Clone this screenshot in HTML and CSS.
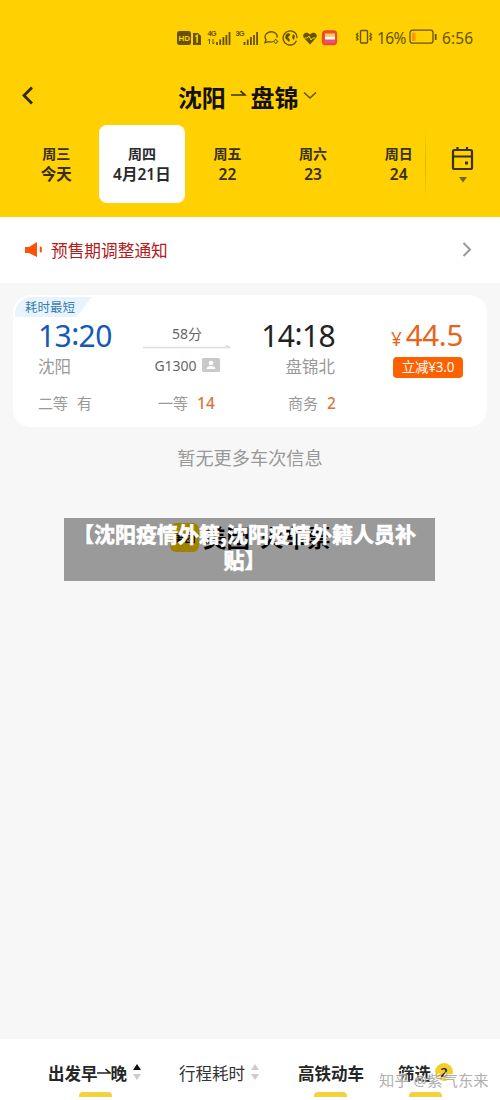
FILE: index.html
```html
<!DOCTYPE html>
<html lang="zh-CN">
<head>
<meta charset="utf-8">
<title>沈阳 - 盘锦</title>
<link rel="stylesheet" href="styles.css">
</head>
<body>
<div class="app">
  <header class="header">
    <div class="status">
      <svg class="status-icons" width="168" height="22" viewBox="0 0 168 22" fill="none" stroke="#665300" stroke-width="1.3">
        <rect x="0" y="4" width="14" height="14" rx="2.5" fill="#665300" stroke="none"/>
        <text x="1.4" y="14.300" class="glyph-yellow">HD</text>
        <path d="M16 6h5l3 3v9h-8z" fill="#665300" stroke="none"/>
        <path d="M18.5 9.5l1.6-1v7.2" stroke="#ffd102" stroke-width="1.6"/>
        <text x="30.500" y="9.4" class="glyph-net">4G</text>
        <path d="M32.5 12v5M31 13.500l1.500-1.500M36 17v-5M36 17l1.500-1.500" stroke-width="1"/>
        <path d="M40 18v-3M43.200 18v-5.500M46.400 18v-8M49.400 18v-10M52.500 18v-13" stroke-width="1.800"/>
        <text x="58.500" y="9.4" class="glyph-net">3G</text>
        <path d="M67.500 18v-3M70.700 18v-5.500M73.900 18v-8M77 18v-10M80.100 18v-13" stroke-width="1.800"/>
        <path d="M96 14.500c-1.500.8-3 .8-4.500.2l-3.500 1 1-3c-4-6 5-10 9.500-6.500 2 1.600 2 3 1.400 4.300"/>
        <path d="M98.700 12l.8 1.600 1.700.9-1.700.9-.8 1.600-.8-1.600-1.700-.9 1.700-.9z" stroke-width="1"/>
        <path d="M117 5.200a7 7 0 1 0 2.500 8.500M115 4.200a7 7 0 0 1 5 7"/>
        <path d="M109 7l3-1 1.500 2-2.500 2 2 3-1 2-4-4zM116 7l2 2-1 4-2-2z" fill="#665300" stroke="none"/>
        <path d="M133 17.500l-6-6.500c-2.800-4 2.700-7.500 6-3.500 3.300-4 8.800-.5 6 3.500z" fill="#665300" stroke="none"/>
        <path d="M127.500 11h3l1.500-2 2 4 1.500-2h3" stroke="#ffd102" stroke-width="1"/>
        <rect x="145.500" y="4" width="14" height="13.500" rx="3" fill="#f04a3c" stroke="#e84c2b"/>
        <path d="M148 8h10" stroke="#ffcf48" stroke-width="3"/><path d="M148 11h10" stroke="#fff" stroke-width="3"/><path d="M148 14.500h10" stroke="#e455a0" stroke-width="2"/>
      </svg>
      <svg class="vibrate" width="18" height="16" viewBox="0 0 18 16" fill="none" stroke="#665300" stroke-width="1.400">
        <rect x="5.500" y="1.500" width="7" height="12.500" rx="1"/>
        <path d="M3 4l-1.500 1.500L3 7l-1.500 1.500L3 10l-1.500 1.500M15 4l1.500 1.500L15 7l1.500 1.500L15 10l1.500 1.500"/>
      </svg>
      <span class="percent">16%</span>
      <svg class="battery" width="29" height="16" viewBox="0 0 29 16" fill="none" stroke="#665300" stroke-width="1.300">
        <rect x="1" y="1.200" width="23" height="13" rx="2.500"/>
        <path d="M26.700 5v6" stroke-width="1.800"/><rect x="3" y="3.500" width="3.500" height="8.500" rx="1" fill="#ff9800" stroke="none"/>
      </svg>
      <span class="clock">6:56</span>
    </div>
    <div class="titlebar">
      <svg class="back" width="14" height="20" viewBox="0 0 14 20"><path d="M12 1.500L4 9.500l8 8" fill="none" stroke="#30290a" stroke-width="2.800"/></svg>
      <h1 class="route">
        <span>沈阳</span>
        <svg width="16" height="10" viewBox="0 0 16 10"><path d="M0 6h14L9.500 2" fill="none" stroke="#3c3200" stroke-width="1.700"/></svg>
        <span>盘锦</span>
        <svg class="chev" width="14" height="9" viewBox="0 0 14 9"><path d="M1 1.500l6 5.500 6-5.500" fill="none" stroke="#665300" stroke-width="1.600"/></svg>
      </h1>
    </div>
    <nav class="dates">
      <div class="date"><span class="week">周三</span><span class="day">今天</span></div>
      <div class="date selected"><span class="week">周四</span><span class="day">4月21日</span></div>
      <div class="date"><span class="week">周五</span><span class="day">22</span></div>
      <div class="date"><span class="week">周六</span><span class="day">23</span></div>
      <div class="date"><span class="week">周日</span><span class="day">24</span></div>
      <div class="calendar">
        <svg width="24" height="36" viewBox="0 0 24 36" fill="none" stroke="#3a3000" stroke-width="2.200">
          <rect x="3" y="3" width="19" height="19" rx="1.500"/><path d="M3 9.500h19M7.500 0v4M17 0v4"/>
          <rect x="15" y="14.500" width="3" height="3" fill="#3a3000" stroke="none"/>
          <path d="M9 30h8l-4 5.500z" fill="#7a6400" stroke="none"/>
        </svg>
      </div>
    </nav>
  </header>
  <div class="notice">
    <svg width="18" height="16" viewBox="0 0 18 16" fill="#ff5207"><path d="M0 5h4l8-5v15l-8-4H0z"/><rect x="14.800" y="4.500" width="2" height="6" rx="1"/></svg>
    <span class="notice-text">预售期调整通知</span>
    <svg class="more" width="10" height="16" viewBox="0 0 10 16"><path d="M1.500 1L8 7.500 1.500 14" fill="none" stroke="#999" stroke-width="2"/></svg>
  </div>
  <main class="content">
    <article class="train">
      <div class="tag"><span>耗时最短</span></div>
      <div class="trip">
        <div class="depart"><span class="time blue">13<em>:</em>20</span><span class="station">沈阳</span></div>
        <div class="middle">
          <span class="duration">58分</span>
          <svg width="88" height="4" viewBox="0 0 88 4"><path d="M0 2.500h87L83 .5" fill="none" stroke="#ddd" stroke-width="1.500"/></svg>
          <span class="number">G1300<svg width="18" height="14" viewBox="0 0 18 14"><rect width="18" height="14" rx="1.500" fill="#c9c9c9"/><circle cx="9" cy="5" r="2.300" fill="#fff"/><path d="M4.500 11c0-4 9-4 9 0z" fill="#fff"/></svg></span>
        </div>
        <div class="arrive"><span class="time">14<em>:</em>18</span><span class="station">盘锦北</span></div>
        <div class="price"><span class="amount"><small>¥</small>44.5</span><span class="discount">立减¥3.0</span></div>
      </div>
      <div class="seats">
        <span class="seat">二等<i>有</i></span>
        <span class="seat">一等<b>14</b></span>
        <span class="seat">商务<b>2</b></span>
      </div>
    </article>
    <p class="empty">暂无更多车次信息</p>
    <div class="brand">
      <span class="logo">美团</span><span>美团</span><span class="product">火车票</span>
      <div class="caption">【沈阳疫情外籍,沈阳疫情外籍人员补贴】</div>
    </div>
  </main>
  <footer class="filters">
    <div class="filter active f1"><span>出发早<svg width="14" height="8" viewBox="0 0 14 8"><path d="M0 6h13L8.500 2" fill="none" stroke="#222" stroke-width="1.600"/></svg>晚</span><svg class="sort" width="8" height="18" viewBox="0 0 8 18"><path d="M0 7l4-6 4 6z" fill="#111"/><path d="M0 11l4 6 4-6z" fill="#ccc"/></svg></div>
    <div class="filter f2"><span>行程耗时</span><svg class="sort" width="8" height="18" viewBox="0 0 8 18"><path d="M0 7l4-6 4 6zM0 11l4 6 4-6z" fill="#ccc"/></svg></div>
    <div class="filter active f3"><span>高铁动车</span></div>
    <div class="filter active f4"><span>筛选</span><span class="count">2</span></div>
    <div class="watermark">知乎 @紫气东来</div>
  </footer>
</div>
</body>
</html>
```
FILE: styles.css
```css
* { box-sizing: border-box; }
body { margin: 0; font-family: "Noto Sans", "Noto Sans CJK SC", sans-serif; color: #222; }
.app { width: 500px; height: 1100px; display: flex; flex-direction: column; background: #f7f7f7; overflow: hidden; }
svg { display: block; flex: none; }
span { white-space: nowrap; }

.header { height: 217px; background: #ffd102; flex: none; }
.status { height: 75px; padding-left: 177px; display: flex; align-items: center; color: #665300; font-size: 15.500px; }
.status-icons { margin-right: 10px; }
.vibrate { margin-top: -1px; }
.glyph-yellow { font: bold 8px "Liberation Sans", sans-serif; fill: #ffd102; stroke: none; }
.glyph-net { font: bold 7.500px "Liberation Sans", sans-serif; letter-spacing: -1px; fill: #665300; stroke: none; }
.percent { width: 31px; margin-left: 4px; letter-spacing: -.6px; }
.battery { margin: -1px 0 0 1px; }
.clock { margin-left: 4px; letter-spacing: .1px; }
.titlebar { height: 50px; display: flex; align-items: center; padding: 0 0 9px 20px; }
.route { display: flex; align-items: center; margin: 2px 0 0 144px; font-size: 24px; line-height: 30px; font-weight: 700; color: #141000; font-family: "Noto Sans CJK SC", sans-serif; letter-spacing: -.2px; }
.route svg { margin: -5px 4px 0 5px; }
.route .chev { margin: -2px 0 0 5px; }
.dates { display: flex; height: 78px; padding-left: 13.500px; }
.date { width: 85.600px; flex: none; display: flex; flex-direction: column; align-items: center; justify-content: center; color: #372f0b; font-weight: 600; border-radius: 8px; }
.selected { background: #fff; color: #292929; }
.week { font-size: 14px; line-height: 20px; }
.day { font-size: 15.500px; line-height: 20px; }
.calendar { width: 75px; margin-left: -16.500px; display: flex; justify-content: center; padding-top: 22px; background: linear-gradient(transparent, #d9b000, transparent) left / 1px 72px no-repeat; }

.notice { height: 66px; flex: none; background: #fff; display: flex; align-items: center; padding: 0 28px 0 25px; }
.notice-text { margin-left: 8px; color: #b31c1c; font-size: 16.700px; }
.more { margin-left: auto; }

.content { flex: 1; padding: 12px 13px 0; }
.train { height: 132px; background: #fff; border-radius: 18px; overflow: hidden; }
.tag { margin: 2px 0 0 2px; width: 77px; height: 20px; padding-left: 10px; background: #e9f3fd; clip-path: polygon(0 0, 100% 0, 80% 100%, 0 100%); border-radius: 17px 0 0 0; color: #347eb3; font-size: 12.500px; line-height: 22px; }
.trip { display: flex; height: 70px; padding-left: 25px; }
.trip > div { display: flex; flex-direction: column; }
.time { font-size: 30px; line-height: 38px; letter-spacing: -.6px; color: #222; }
.time em { font-style: normal; position: relative; top: -2px; }
.blue { color: #1459b8; }
.station { font-size: 16.500px; line-height: 24px; color: #999; }
.depart { width: 105px; }
.middle { width: 88px; align-items: center; padding-top: 7px; }
.duration { font-size: 14px; line-height: 19px; color: #666; height: 21px; }
.number { display: flex; align-items: center; gap: 5px; margin-top: 5px; font-size: 14px; line-height: 24px; color: #666; }
.number svg { margin-top: -3px; }
.arrive { width: 104px; align-items: flex-end; }
.price { width: 128px; align-items: flex-end; }
.amount { font-size: 29.500px; line-height: 35px; letter-spacing: -.3px; color: #e8641b; }
.amount small { font-size: 19px; margin-right: 4px; }
.discount { width: 70px; height: 21px; border-radius: 4px; background: #ff6000; color: #fff; font-size: 13.500px; line-height: 21px; text-align: center; letter-spacing: -.2px; }
.seats { display: flex; padding-left: 25px; font-size: 15px; line-height: 32px; color: #999; }
.seat { width: 120px; }
.seat + .seat { width: 130px; }
.seat i { font-style: normal; margin-left: 9px; }
.seat b { font-size: 15.500px; font-weight: 500; color: #d97536; margin-left: 9px; }
.empty { margin: 17px 0 0; text-align: center; font-size: 18.200px; line-height: 28px; color: #999; }
.brand { position: relative; margin: 46px -13px 0; height: 63px; padding: 5px 0 0 170px; display: flex; font: 700 23.500px/28px "Noto Sans CJK SC", sans-serif; color: #000; }
.logo { width: 29px; height: 29px; border-radius: 6px; background: #ffd102; font-size: 11px; line-height: 28px; text-align: center; margin-right: 4px; }
.product { margin-left: 10px; }
.caption { position: absolute; left: 64px; top: 0; width: 371px; height: 63px; padding: 2px 10px 0 0; background: rgba(0, 0, 0, .375); color: #fff; text-align: center; font-size: 21px; line-height: 26px; -webkit-text-stroke: .6px #fff; }

.filters { position: relative; height: 61px; flex: none; background: #fff; display: flex; padding-left: 48px; font-size: 16.500px; }
.filter { height: 58px; display: flex; align-items: center; padding-top: 10px; color: #333; position: relative; }
.filter > span { display: flex; align-items: center; }
.active { font-weight: 600; color: #262626; }
.active::after { content: ""; position: absolute; left: var(--mark); bottom: 0; width: 33px; height: 5px; border-radius: 4px 4px 0 0; background: #f3d33c; }
.f1 { width: 131px; --mark: 31px; }
.f2 { width: 119px; }
.f3 { width: 100px; --mark: 16px; }
.f4 { --mark: 11px; }
.f1 > span svg { margin: -5px -.5px 0; }
.sort { margin: -2px 0 0 6px; }
.filter .count { width: 18px; height: 18px; margin: -2px 0 0 4px; border-radius: 50%; background: #f5cf28; font-size: 13px; justify-content: center; }
.watermark { position: absolute; left: 379px; top: 30px; font-size: 15.300px; line-height: 23px; color: rgba(165, 165, 165, .9); text-shadow: -1px -1px 0 rgba(255, 255, 255, .8); white-space: nowrap; }
```
